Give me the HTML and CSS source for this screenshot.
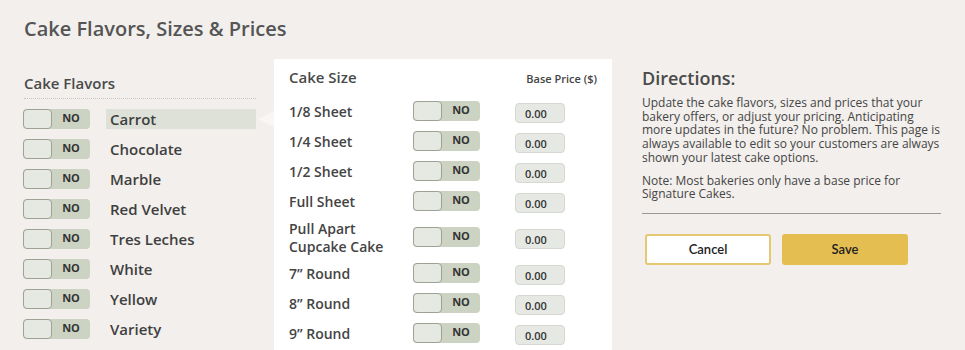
FILE: index.html
```html
<!DOCTYPE html>
<html lang="en">
<head>
    <meta charset="UTF-8">
    <meta name="viewport" content="width=device-width, initial-scale=1.0">
    <title>Cake Flavors, Sizes &amp; Prices</title>
    <link rel="stylesheet" href="styles.css">
</head>
<body>
    <div class="page">
        <h1 class="page-title">Cake Flavors, Sizes &amp; Prices</h1>

        <div class="main">
            <div class="flavors">
                <h3 class="section-title">Cake Flavors</h3>
                <div class="flavor-list">
                    <div class="flavor-row">
                        <div class="toggle"><span class="knob"></span><span class="toggle-label">NO</span></div>
                        <div class="flavor-name active">Carrot<span class="pointer"></span></div>
                    </div>
                    <div class="flavor-row">
                        <div class="toggle"><span class="knob"></span><span class="toggle-label">NO</span></div>
                        <div class="flavor-name">Chocolate</div>
                    </div>
                    <div class="flavor-row">
                        <div class="toggle"><span class="knob"></span><span class="toggle-label">NO</span></div>
                        <div class="flavor-name">Marble</div>
                    </div>
                    <div class="flavor-row">
                        <div class="toggle"><span class="knob"></span><span class="toggle-label">NO</span></div>
                        <div class="flavor-name">Red Velvet</div>
                    </div>
                    <div class="flavor-row">
                        <div class="toggle"><span class="knob"></span><span class="toggle-label">NO</span></div>
                        <div class="flavor-name">Tres Leches</div>
                    </div>
                    <div class="flavor-row">
                        <div class="toggle"><span class="knob"></span><span class="toggle-label">NO</span></div>
                        <div class="flavor-name">White</div>
                    </div>
                    <div class="flavor-row">
                        <div class="toggle"><span class="knob"></span><span class="toggle-label">NO</span></div>
                        <div class="flavor-name">Yellow</div>
                    </div>
                    <div class="flavor-row">
                        <div class="toggle"><span class="knob"></span><span class="toggle-label">NO</span></div>
                        <div class="flavor-name">Variety</div>
                    </div>
                </div>
            </div>

            <div class="sizes">
                <div class="sizes-header">
                    <h3 class="section-title">Cake Size</h3>
                    <span class="price-head">Base Price ($)</span>
                </div>
                <div class="size-row">
                    <div class="size-name">1/8 Sheet</div>
                    <div class="toggle"><span class="knob"></span><span class="toggle-label">NO</span></div>
                    <input class="price" type="text" value="0.00">
                </div>
                <div class="size-row">
                    <div class="size-name">1/4 Sheet</div>
                    <div class="toggle"><span class="knob"></span><span class="toggle-label">NO</span></div>
                    <input class="price" type="text" value="0.00">
                </div>
                <div class="size-row">
                    <div class="size-name">1/2 Sheet</div>
                    <div class="toggle"><span class="knob"></span><span class="toggle-label">NO</span></div>
                    <input class="price" type="text" value="0.00">
                </div>
                <div class="size-row">
                    <div class="size-name">Full Sheet</div>
                    <div class="toggle"><span class="knob"></span><span class="toggle-label">NO</span></div>
                    <input class="price" type="text" value="0.00">
                </div>
                <div class="size-row tall">
                    <div class="size-name">Pull Apart<br>Cupcake Cake</div>
                    <div class="toggle"><span class="knob"></span><span class="toggle-label">NO</span></div>
                    <input class="price" type="text" value="0.00">
                </div>
                <div class="size-row">
                    <div class="size-name">7&#8221; Round</div>
                    <div class="toggle"><span class="knob"></span><span class="toggle-label">NO</span></div>
                    <input class="price" type="text" value="0.00">
                </div>
                <div class="size-row">
                    <div class="size-name">8&#8221; Round</div>
                    <div class="toggle"><span class="knob"></span><span class="toggle-label">NO</span></div>
                    <input class="price" type="text" value="0.00">
                </div>
                <div class="size-row">
                    <div class="size-name">9&#8221; Round</div>
                    <div class="toggle"><span class="knob"></span><span class="toggle-label">NO</span></div>
                    <input class="price" type="text" value="0.00">
                </div>
            </div>

            <div class="directions">
                <h2 class="directions-title">Directions:</h2>
                <p>Update the cake flavors, sizes and prices that your bakery offers, or adjust your pricing. Anticipating more updates in the future? No problem. This page is always available to edit so your customers are always shown your latest cake options.</p>
                <p>Note: Most bakeries only have a base price for Signature Cakes.</p>
                <div class="actions">
                    <button class="btn btn-cancel">Cancel</button>
                    <button class="btn btn-save">Save</button>
                </div>
            </div>
        </div>
    </div>
</body>
</html>
```

FILE: styles.css
```css
body {
    margin: 0;
    background-color: #f2efec;
    font-family: "Open Sans", Arial, sans-serif;
    color: #464646;
}
.page {
    padding: 15px 0 0 24px;
}
.page-title {
    margin: 0;
    font-size: 20px;
    line-height: 28px;
    font-weight: 600;
    color: #555;
}
.main {
    display: flex;
    align-items: flex-start;
    margin-top: 16px;
}
.section-title {
    margin: 0;
    font-size: 15px;
    line-height: 20px;
    font-weight: 600;
    color: #4a4a4a;
}

/* flavors column */
.flavors {
    width: 233px;
    margin-left: -1px;
    padding-top: 14px;
}
.flavors .section-title {
    margin-left: 1px;
    padding-bottom: 5px;
    border-bottom: 1px dotted #c9c6c1;
}
.flavor-list {
    display: flex;
    flex-direction: column;
    gap: 10px;
    margin-top: 10px;
}
.flavor-row {
    display: flex;
    align-items: center;
    height: 20px;
}
.flavor-name {
    position: relative;
    flex: 1;
    margin-left: 16px;
    padding-left: 4px;
    font-size: 15px;
    line-height: 20px;
    font-weight: 600;
    color: #3f3f3f;
}
.flavor-name.active {
    background-color: #dee1d8;
}
.pointer {
    position: absolute;
    right: -18px;
    top: 2px;
    width: 0;
    height: 0;
    border-top: 8px solid transparent;
    border-bottom: 8px solid transparent;
    border-right: 16px solid #f8f7f5;
}

/* toggle */
.toggle {
    display: flex;
    width: 67px;
    height: 20px;
    flex-shrink: 0;
    background-color: #cdd3c3;
    border-radius: 4px;
}
.knob {
    width: 27px;
    height: 18px;
    background-color: #e5e9e2;
    border: 1px solid #9da295;
    border-radius: 4px;
}
.toggle-label {
    flex: 1;
    text-align: center;
    font-size: 11px;
    line-height: 18px;
    font-weight: 700;
    color: #333;
}

/* sizes panel */
.sizes {
    width: 323px;
    margin-left: 18px;
    padding: 8px 0 20px 15px;
    background: #fff;
}
.sizes-header {
    display: flex;
    justify-content: space-between;
    align-items: flex-end;
    padding-right: 15px;
    margin-bottom: 10px;
}
.price-head {
    font-size: 11px;
    line-height: 16px;
    font-weight: 600;
    color: #444;
}
.size-row {
    display: flex;
    align-items: center;
    min-height: 30px;
}
.size-row.tall {
    padding: 3px 0;
}
.size-name {
    width: 124px;
    font-size: 14px;
    line-height: 18px;
    font-weight: 600;
    color: #444;
}
.size-row .toggle {
    margin-top: -2px;
}
.price {
    box-sizing: border-box;
    width: 50px;
    height: 20px;
    margin: 2px 0 0 35px;
    padding: 0 0 0 9px;
    background-color: #e6e9e3;
    border: 1px solid #d6d9d2;
    border-radius: 4px;
    font-family: "Open Sans", Arial, sans-serif;
    font-size: 11px;
    font-weight: 600;
    color: #333;
}

/* directions */
.directions {
    width: 299px;
    margin-left: 30px;
    padding-top: 6px;
}
.directions-title {
    margin: 0 0 5px;
    font-size: 18px;
    line-height: 26px;
    font-weight: 600;
    color: #4a4a4a;
}
.directions p {
    margin: 0 0 9px;
    font-size: 12px;
    line-height: 13.7px;
    color: #454545;
}
.directions p:last-of-type {
    margin-bottom: 0;
    padding-bottom: 12px;
    border-bottom: 1px solid #9a9896;
}
.actions {
    display: flex;
    gap: 11px;
    margin: 20px 0 0 3px;
}
.btn {
    box-sizing: border-box;
    width: 126px;
    height: 31px;
    border-radius: 3px;
    font-family: Lato, "Open Sans", sans-serif;
    font-size: 13px;
    font-weight: 600;
    color: #222;
    cursor: pointer;
}
.btn-cancel {
    background: #fff;
    border: 2px solid #e6c873;
}
.btn-save {
    background: #e5be52;
    border: none;
}
```
